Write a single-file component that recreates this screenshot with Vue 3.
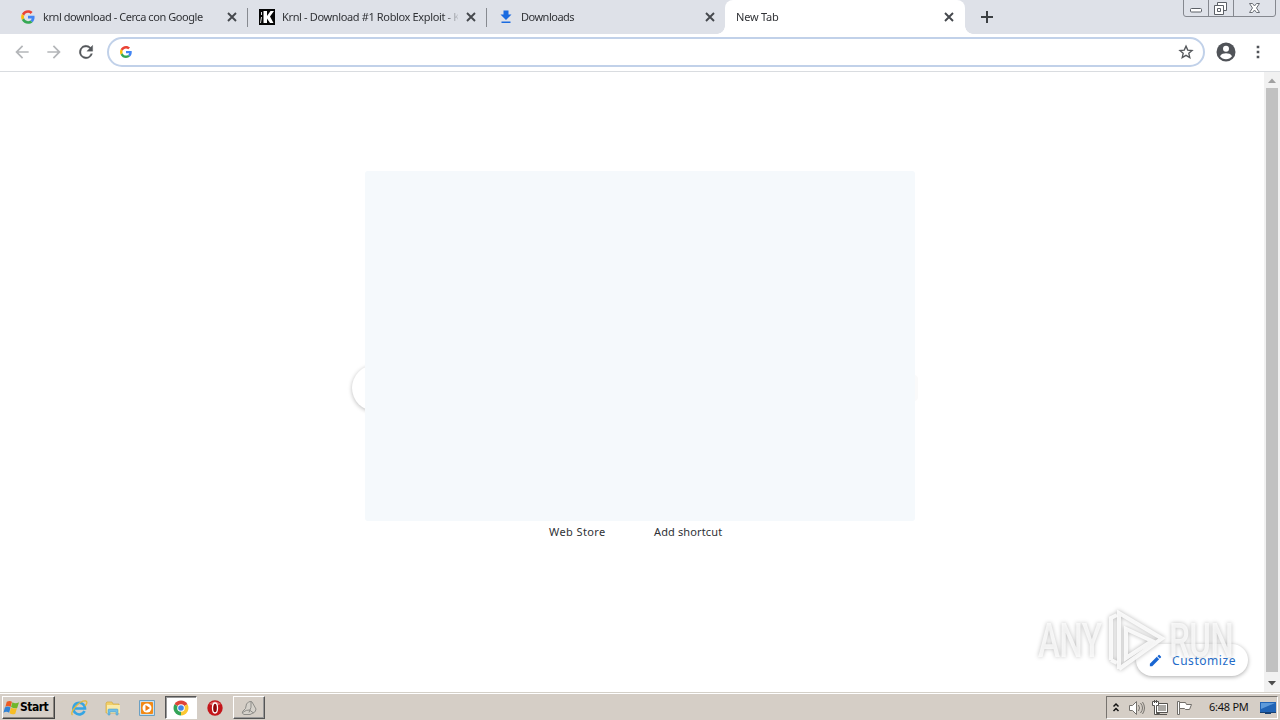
<template>
  <div class="screen">
    <header class="tab-strip">
      <div
        v-for="(tab, i) in tabs"
        :key="tab.title"
        class="tab"
        :class="{ active: tab.active, divided: i > 0 && !tab.active }"
      >
        <svg v-if="tab.icon === 'google'" class="favicon" viewBox="-4 -4 56 56">
          <path v-for="p in googleG" :key="p.d" :d="p.d" :fill="p.fill" />
        </svg>
        <svg v-else-if="tab.icon === 'krnl'" class="favicon" viewBox="0 0 16 16">
          <rect width="16" height="16" fill="#050505" />
          <path d="M4.500 2H8v5l3.500-5H15l-4 5.500 3.500 6.500H11L8 9.500V14H4.500z" fill="#fff" />
          <path d="M1.500 14l1-6M2.500 3v3" stroke="#ddd" fill="none" />
        </svg>
        <svg v-else-if="tab.icon === 'download'" class="favicon" viewBox="0 0 16 16">
          <path d="M5.500 1.500h5v4h3L8 11 2.500 5.500h3zM3.500 12.500h9V14h-9z" fill="#1a6be0" />
        </svg>
        <span class="title" :style="{ letterSpacing: tab.spacing + 'px' }">{{ tab.title }}</span>
        <svg class="close" viewBox="0 0 16 16">
          <path d="M4 4l8 8M12 4l-8 8" stroke="#45484d" stroke-width="1.900" />
        </svg>
      </div>
      <svg class="new-tab" viewBox="0 0 16 16">
        <path d="M8 2v12M2 8h12" stroke="#3c4043" stroke-width="2" />
      </svg>
      <svg class="window-controls" viewBox="0 0 94 18">
        <path d="M.5 0v14q0 2.500 2.500 2.500h87q2.500 0 2.500-2.500V0M25.500 0v16M50.500 0v16" fill="#dfe2e9" stroke="#85888f" />
        <rect x="7.500" y="8.500" width="11" height="3.500" rx="1" fill="#fff" stroke="#5c6067" />
        <path d="M34.500 2.500h9v8h-9z" fill="#fff" stroke="#5c6067" />
        <path d="M31.500 5.500h9v9h-9zM34.500 8.500h3v3h-3z" fill="#fff" stroke="#5c6067" />
        <path d="M66.500 3.500h3l2 2.500 2-2.500h3l-3 4.500 3 4.500h-3l-2-2.500-2 2.500h-3l3-4.500z" fill="#fff" stroke="#6b6f76" />
      </svg>
    </header>

    <div class="toolbar">
      <svg class="nav back" viewBox="0 0 24 24">
        <path d="M20 11H7.830l5.590-5.590L12 4l-8 8 8 8 1.410-1.410L7.830 13H20z" fill="#b4b6b9" />
      </svg>
      <svg class="nav forward" viewBox="0 0 24 24">
        <path d="M12 4l-1.410 1.410L16.170 11H4v2h12.170l-5.580 5.590L12 20l8-8z" fill="#b4b6b9" />
      </svg>
      <svg class="nav" viewBox="0 0 24 24">
        <path d="M17.650 6.350A8 8 0 1 0 19.730 14h-2.080A6 6 0 1 1 12 6c1.660 0 3.140.69 4.220 1.780L13 11h7V4z" fill="#54575b" stroke="#54575b" stroke-width=".4" />
      </svg>
      <div class="omnibox">
        <svg class="google" viewBox="0 0 48 48">
          <path v-for="p in googleG" :key="p.d" :d="p.d" :fill="p.fill" />
        </svg>
        <svg class="star" viewBox="0 0 24 24">
          <path d="M12 3.200l2.600 6 6.500.5-4.900 4.300 1.500 6.400L12 17l-5.700 3.400 1.500-6.400-4.900-4.300 6.500-.5z" fill="none" stroke="#54575b" stroke-width="2" />
        </svg>
      </div>
      <svg class="profile" viewBox="0 0 20 20">
        <circle cx="10" cy="10" r="9.500" fill="#505358" />
        <circle cx="10" cy="6.700" r="3" fill="#fff" />
        <path d="M4 14.300c1-2.400 4-3 6-3s5 .6 6 3c-1.500 2-3.500 3-6 3s-4.500-1-6-3z" fill="#fff" />
      </svg>
      <svg class="menu" viewBox="0 0 4 14">
        <path d="M.7.700h2.600v2.600H.7zM.7 5.700h2.600v2.600H.7zM.7 10.700h2.600v2.600H.7z" fill="#505358" />
      </svg>
    </div>

    <main class="page">
      <div class="content">
        <div class="logo-area">
          <span class="circle left"></span>
          <span class="circle right"></span>
          <div class="blank"></div>
        </div>
        <div class="shortcuts">
          <span class="store">Web Store</span>
          <span class="add">Add shortcut</span>
        </div>
        <button class="customize">
          <svg viewBox="0 0 24 24">
            <path d="M3 17.250V21h3.750L17.810 9.940l-3.750-3.750zM20.710 7.040a1 1 0 0 0 0-1.410l-2.340-2.340a1 1 0 0 0-1.410 0l-1.830 1.830 3.750 3.750z" fill="#1a66d2" />
          </svg>
          <span>Customize</span>
        </button>
        <div class="watermark">
          <span class="word any">ANY</span>
          <svg class="play" viewBox="0 0 60 64">
            <path d="M5 51V9l6-3M5 51l6 3" />
            <path d="M13 60V4l43 25.500L13 60M20 20v29l26-17z" />
          </svg>
          <span class="word run">RUN</span>
        </div>
      </div>
      <div class="scrollbar">
        <svg viewBox="0 0 16 16"><path d="M4 11l4-4.500 4 4.500z" fill="#a0a0a0" /></svg>
        <div class="thumb"></div>
        <svg viewBox="0 0 16 16"><path d="M4 6l4 4.500L12 6z" fill="#4c4c4c" /></svg>
      </div>
    </main>

    <footer class="taskbar">
      <div class="start">
        <svg viewBox="0 0 18 16">
          <path d="M4 2q3-2 5.500 0L8 7.500Q5 5.500 2.500 7.500z" fill="#ed5b24" />
          <path d="M10 2.500q3 2 7 0L15 8.500Q12 9.500 8.500 7.500z" fill="#70b72b" />
          <path d="M2 8q3-2 6 0L6.500 13.500q-3-2-6 0z" fill="#3183d5" />
          <path d="M8.300 8.200q3 1.500 6.500.3L13 14.500q-3 1.500-6-.5z" fill="#f7bd24" />
        </svg>
        <span>Start</span>
      </div>
      <div class="item">
        <svg viewBox="0 0 18 18">
          <path d="M14.500 12A5.800 5.800 0 1 1 15 9.500H5" fill="none" stroke="#36a5e3" stroke-width="2.600" />
          <path d="M2.500 16C-1 13 10 1 16 2c2 1 0 4-1 5" fill="none" stroke="#e3b83b" stroke-width="1.300" />
        </svg>
      </div>
      <div class="item">
        <svg viewBox="0 0 18 18">
          <path d="M2 4l1-1h5l1 2h6v9H2z" fill="#f1cf68" stroke="#d3a943" stroke-width=".7" />
          <path d="M3 6h13v8H3z" fill="#faeaa8" />
          <path d="M4 16v-5q0-1 1-1h8q1 0 1 1v5h-2v-3H6v3z" fill="#72bfe5" stroke="#4599c5" stroke-width=".5" />
        </svg>
      </div>
      <div class="item">
        <svg viewBox="0 0 18 18">
          <path d="M1.500 1.500h15v15h-15z" fill="#c9dfed" stroke="#6ba0c3" />
          <rect x="3" y="3" width="12" height="12" rx="1" fill="#f28a17" />
          <circle cx="9" cy="9" r="4.500" fill="#fff" />
          <path d="M7.500 6l4.500 3-4.500 3z" fill="#ed7b12" />
        </svg>
      </div>
      <div class="item pressed">
        <svg viewBox="0 0 18 18">
          <path d="M9 9L2.500 5.300A7.500 7.500 0 0 1 15.500 5.300z" fill="#df4438" />
          <path d="M9 9l6.500-3.700A7.500 7.500 0 0 1 9 16.500z" fill="#fcc832" />
          <path d="M9 9v7.500A7.500 7.500 0 0 1 2.500 5.300z" fill="#33a457" />
          <circle cx="9" cy="9" r="3.800" fill="#fff" />
          <circle cx="9" cy="9" r="2.800" fill="#4285e8" />
        </svg>
      </div>
      <div class="item">
        <svg viewBox="0 0 18 18">
          <circle cx="9" cy="9" r="7.700" fill="#c4161b" />
          <path d="M3 5q6-5 12 0-6 3-12 0" fill="#df6465" />
          <ellipse cx="9" cy="9" rx="2.500" ry="5" fill="#8e0509" stroke="#fff" stroke-width="1.300" />
        </svg>
      </div>
      <div class="item raised">
        <svg viewBox="0 0 18 18">
          <path d="M6.500 5q2-3 4.500-2.500l1 .5 4 7q0 3-3 4l-3 1.500H4q-2.500-1-1.500-3l3-3zM11 2.500q1 6-2 11M2.500 13.500q4-3 7-2.500l4 3" fill="#d6d2cb" stroke="#8d8c88" />
        </svg>
      </div>

      <div class="tray">
        <svg class="chevrons" viewBox="0 0 8 12">
          <path d="M1.500 4.500L4 2l2.500 2.500M1.500 9L4 6.500 6.500 9" fill="none" stroke="#111" stroke-width="1.500" />
        </svg>
        <svg class="tray-icon speaker" viewBox="0 0 18 16">
          <path d="M1.500 5.500h3l4-4v13l-4-4h-3z" fill="#fff" stroke="#74716d" />
          <path d="M10.500 5q2 3 0 6M12.500 3q4 5 0 10M14.500 2q4 6 0 12" fill="none" stroke="#77746f" />
        </svg>
        <svg class="tray-icon network" viewBox="0 0 18 16">
          <path d="M4.500 3.500h11v9h-11z" fill="#fff" stroke="#55534f" />
          <path d="M6 5h8v6H6z" fill="#aaa8a4" />
          <path d="M7 14.500h8" stroke="#55534f" />
          <path d="M.5 1.500h6v4h-2v8h3v1h-5v-9h-2zM2.500 0v3M4.500 0v3" fill="#fff" stroke="#55534f" />
        </svg>
        <svg class="tray-icon flag" viewBox="0 0 18 16">
          <path d="M1.500 1.500h2v13h-2z" fill="#fff" stroke="#716e69" />
          <path d="M3.500 2.500h6l1 2h5l-2 5h-4l-1-1h-5z" fill="#fff" stroke="#716e69" />
        </svg>
        <span class="clock">6:48 PM</span>
        <svg class="desktop" viewBox="0 0 16 14">
          <path d="M0 1h16v10H0z" fill="#2164b5" />
          <path d="M1 2h14L1 8z" fill="#5d9ada" />
          <path d="M0 11h16v1H0zM5 12h6v1H5z" fill="#174174" />
        </svg>
      </div>
    </footer>
  </div>
</template>

<script setup>
const tabs = [
  { title: 'krnl download - Cerca con Google', icon: 'google', spacing: -0.44 },
  { title: 'Krnl - Download #1 Roblox Exploit - Krnl', icon: 'krnl', spacing: -0.36 },
  { title: 'Downloads', icon: 'download', spacing: -0.5 },
  { title: 'New Tab', active: true, spacing: -0.2 }
]

const googleG = [
  { fill: '#ea4335', d: 'M24 9.500c3.540 0 6.710 1.220 9.210 3.600l6.850-6.850C35.900 2.380 30.470 0 24 0 14.620 0 6.510 5.380 2.560 13.220l7.980 6.190C12.430 13.720 17.740 9.500 24 9.500z' },
  { fill: '#4285f4', d: 'M46.980 24.550c0-1.570-.15-3.090-.38-4.550H24v9.020h12.940c-.58 2.960-2.260 5.480-4.780 7.180l7.730 6c4.510-4.180 7.090-10.360 7.090-17.650z' },
  { fill: '#fbbc05', d: 'M10.530 28.590A14.500 14.500 0 0 1 9.770 24c0-1.600.27-3.140.76-4.590l-7.980-6.190A24 24 0 0 0 0 24c0 3.880.92 7.540 2.560 10.780z' },
  { fill: '#34a853', d: 'M24 48c6.480 0 11.930-2.130 15.890-5.810l-7.730-6c-2.150 1.450-4.920 2.300-8.160 2.300-6.260 0-11.570-4.220-13.470-9.910l-7.980 6.190C6.510 42.620 14.620 48 24 48z' }
]
</script>

<style>
body {
  margin: 0;
  overflow: hidden;
}
</style>

<style scoped>
.screen {
  display: flex;
  flex-direction: column;
  width: 1280px;
  height: 720px;
  background: #fff;
  color: #303236;
  font-family: 'Noto Sans', 'Open Sans', sans-serif;
  font-size: 11px;
}

svg {
  display: block;
  flex: none;
}

.tab-strip {
  display: flex;
  height: 34px;
  padding-left: 8px;
  background: #dee1e8;
}

.tab {
  position: relative;
  display: flex;
  align-items: center;
  box-sizing: border-box;
  width: 239px;
  padding: 0 7px 0 12px;
}

.tab.divided::before {
  content: '';
  position: absolute;
  top: 8px;
  left: 0;
  width: 1px;
  height: 19px;
  background: #878a90;
}

.tab.active {
  width: 240px;
  padding-left: 11px;
  padding-right: 8px;
  border-radius: 8px 8px 0 0;
  background: #fff;
}

.tab.active::before,
.tab.active::after {
  content: '';
  position: absolute;
  bottom: 0;
  left: -8px;
  width: 8px;
  height: 8px;
  background: radial-gradient(circle at 0 0, transparent 7.5px, #fff 8px);
}

.tab.active::after {
  left: 100%;
  background: radial-gradient(circle at 100% 0, transparent 7.5px, #fff 8px);
}

.favicon {
  width: 16px;
  height: 16px;
  margin-right: 7px;
}

.title {
  flex: none;
  width: 176px;
  overflow: hidden;
  white-space: nowrap;
  line-height: 20px;
  mask-image: linear-gradient(to right, #000 162px, transparent 178px);
}

.close {
  width: 16px;
  height: 16px;
  margin-left: auto;
}

.new-tab {
  width: 16px;
  height: 16px;
  margin: 9px 0 0 14px;
}

.window-controls {
  width: 94px;
  height: 18px;
  margin-left: auto;
  margin-right: 3px;
}

.toolbar {
  display: flex;
  align-items: center;
  box-sizing: border-box;
  height: 38px;
  padding: 0 20px 2px 12px;
  border-bottom: 1px solid #d9dce0;
}

.nav {
  width: 20px;
  height: 20px;
  margin-right: 12px;
}

.omnibox {
  display: flex;
  align-items: center;
  justify-content: space-between;
  box-sizing: border-box;
  width: 1098px;
  height: 30px;
  margin-left: -1px;
  padding: 0 9px 0 11px;
  border: 2px solid #c1d1e9;
  border-radius: 15px;
}

.google {
  width: 12px;
  height: 12px;
}

.star {
  width: 16px;
  height: 16px;
}

.profile {
  width: 20px;
  height: 20px;
  margin-left: 11px;
}

.menu {
  width: 4px;
  height: 14px;
  margin-left: auto;
}

.page {
  display: flex;
  height: 620px;
}

.content {
  position: relative;
  width: 1264px;
}

.logo-area {
  position: relative;
  width: 550px;
  height: 350px;
  margin: 99px auto 0 365px;
}

.blank {
  position: relative;
  width: 550px;
  height: 350px;
  border-radius: 3px;
  background: #f5f9fc;
}

.circle {
  position: absolute;
  top: 194px;
  left: -13px;
  width: 46px;
  height: 46px;
  border-radius: 50%;
  background: #fff;
  box-shadow: 0 1px 4px #bbb;
}

.circle.right {
  top: 204px;
  left: 535px;
  width: 18px;
  height: 26px;
  border-radius: 4px;
  background: #fafafa;
  box-shadow: none;
}

.shortcuts {
  display: flex;
  padding-left: 549px;
  line-height: 22px;
  letter-spacing: 0.13px;
}

.store {
  width: 105px;
  letter-spacing: 0.4px;
}

.customize {
  position: absolute;
  right: 16px;
  bottom: 16px;
  display: flex;
  align-items: center;
  gap: 9px;
  box-sizing: border-box;
  width: 112px;
  height: 32px;
  padding: 0 12px;
  border: 0;
  border-radius: 16px;
  background: #fff;
  box-shadow: 0 1px 4px #aaa;
  color: #236bc8;
  font: 12px 'Noto Sans', sans-serif;
  letter-spacing: 0.55px;
}

.customize svg {
  width: 15px;
  height: 15px;
}

.watermark {
  position: absolute;
  top: 535px;
  left: 1038px;
  display: flex;
  align-items: center;
  height: 68px;
  color: rgba(255, 255, 255, 0.75);
  filter: drop-shadow(0 0 2px #aaa);
  pointer-events: none;
}

.word {
  width: 68px;
  font: 500 48px/60px Roboto, sans-serif;
  letter-spacing: -1px;
  transform: scaleX(0.69);
  transform-origin: left;
}

.play {
  width: 60px;
  height: 64px;
  margin-right: 3px;
  fill: none;
  stroke: rgba(255, 255, 255, 0.85);
  stroke-width: 4;
}

.scrollbar {
  width: 16px;
  background: #f1f1f1;
}

.scrollbar svg {
  width: 16px;
  height: 16px;
}

.thumb {
  width: 12px;
  height: 584px;
  margin: 0 2px 3px;
  background: #c1c1c1;
}

.taskbar {
  display: flex;
  align-items: center;
  box-sizing: border-box;
  height: 28px;
  padding: 2px 2px 0;
  border-top: 1px solid #d4d0c8;
  background: #d5cec6;
  box-shadow: inset 0 1px #fff;
}

.start {
  display: flex;
  align-items: center;
  box-sizing: border-box;
  width: 53px;
  height: 23px;
  margin-right: 8px;
  border: 1px solid;
  border-color: #fff #444 #444 #fff;
  box-shadow: inset -1px -1px #8c8780;
  color: #000;
  font: bold 12px 'DejaVu Sans Condensed', 'DejaVu Sans', sans-serif;
  letter-spacing: -0.5px;
}

.start svg {
  width: 17px;
  height: 17px;
}

.start span {
  padding-bottom: 1px;
}

.item {
  display: flex;
  align-items: center;
  justify-content: center;
  box-sizing: border-box;
  width: 32px;
  height: 23px;
  margin-right: 2px;
}

.item svg {
  width: 18px;
  height: 18px;
}

.pressed {
  border: 1px solid;
  border-color: #555 #fff #fff #555;
  background: #fff;
  box-shadow: inset 1px 1px #999;
}

.raised {
  border: 1px solid;
  border-color: #fff #555 #555 #fff;
  box-shadow: inset -1px -1px #999;
}

.tray {
  display: flex;
  align-items: center;
  box-sizing: border-box;
  width: 172px;
  height: 23px;
  margin-left: auto;
  padding-left: 5px;
  border: 1px solid;
  border-color: #77736e #fff #fff #77736e;
  color: #111;
}

.chevrons {
  width: 8px;
  height: 12px;
  margin-right: 8px;
}

.tray-icon {
  width: 18px;
  height: 16px;
  margin-right: 6px;
}

.clock {
  width: 51px;
  margin-left: 9px;
  padding-bottom: 2px;
  white-space: nowrap;
  line-height: 15px;
  letter-spacing: -0.25px;
}

.desktop {
  width: 16px;
  height: 14px;
}
</style>
